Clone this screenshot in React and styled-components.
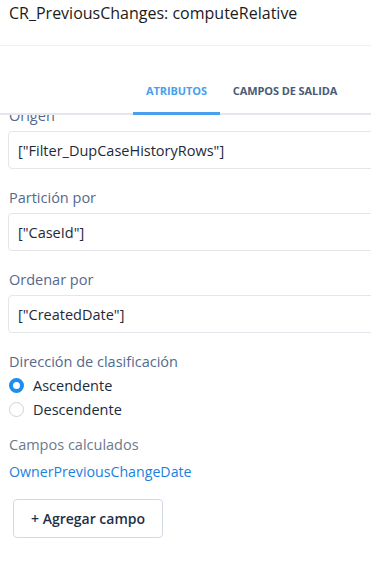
import React from 'react'
import styled, { createGlobalStyle } from 'styled-components'

const GlobalStyle = createGlobalStyle`
  html, body {
    margin: 0;
    padding: 0;
    background: #fff;
    overflow: hidden;
  }
  body {
    font-family: 'Open Sans', 'Noto Sans', sans-serif;
    color: #16325c;
  }
`

const Panel = styled.div`
  width: 371px;
  height: 564px;
  display: flex;
  flex-direction: column;
  overflow: hidden;
`

const Header = styled.div`
  height: 45px;
  border-bottom: 1px solid #eef0f3;
  padding: 0 9px;
  flex: none;
`

const Title = styled.h1`
  margin: 0;
  padding-top: 3px;
  font-size: 16px;
  font-weight: 400;
  line-height: 20px;
  color: #1b1b1b;
`

const TabBar = styled.div`
  display: flex;
  padding: 38px 0 0 133px;
  border-bottom: 2px solid #e4e8ee;
  background: #fff;
  position: relative;
  z-index: 1;
  flex: none;
`

const Tab = styled.div`
  padding: 0 13px 14px;
  font-size: 11px;
  font-weight: 700;
  letter-spacing: -0.1px;
  line-height: 14px;
  color: ${(p) => (p.active ? '#4aa0ec' : '#4a5b75')};
  margin-bottom: -2px;
  border-bottom: 3px solid ${(p) => (p.active ? '#4aa0ec' : 'transparent')};
`

const Body = styled.div`
  flex: 1;
  overflow: hidden;
  padding: 0 0 0 8px;
`

const Scroller = styled.div`
  margin-top: -9px;
`

const Label = styled.div`
  font-size: 14.5px;
  line-height: 20px;
  color: ${(p) => (p.muted ? '#6c7a8d' : '#54698d')};
  padding-left: 1px;
  margin-bottom: 5px;
`

const Field = styled.div`
  width: 420px;
  height: 38px;
  box-sizing: border-box;
  border: 1px solid #e3e6eb;
  border-radius: 4px;
  display: flex;
  align-items: center;
  padding-left: 9px;
  font-size: 14.5px;
  color: #1e2a3b;
  margin-bottom: 19px;
`

const RadioGroup = styled.div`
  display: flex;
  flex-direction: column;
  gap: 5px;
  margin-top: -1px;
  margin-bottom: 16px;
`

const RadioRow = styled.label`
  display: flex;
  align-items: center;
  gap: 9px;
  font-size: 14.5px;
  line-height: 19px;
  color: #1e2a3b;
`

const RadioDot = styled.span`
  width: 15px;
  height: 15px;
  box-sizing: border-box;
  border-radius: 50%;
  margin-left: 1px;
  border: ${(p) => (p.checked ? '4px solid #1b8ef0' : '1px solid #ccd3dd')};
  background: #fff;
`

const Link = styled.a`
  display: block;
  font-size: 14.2px;
  line-height: 20px;
  color: #1a7fe0;
  text-decoration: none;
  padding-left: 1px;
  margin-top: 7px;
`

const AddButton = styled.button`
  margin: 17px 0 0 5px;
  width: 150px;
  height: 39px;
  background: #fff;
  border: 1px solid #d3d9e2;
  border-radius: 4px;
  font-family: inherit;
  font-size: 14px;
  font-weight: 600;
  color: #1e2f48;
`

export default function App() {
  return (
    <Panel>
      <GlobalStyle />
      <Header>
        <Title>CR_PreviousChanges: computeRelative</Title>
      </Header>
      <TabBar>
        <Tab active>ATRIBUTOS</Tab>
        <Tab>CAMPOS DE SALIDA</Tab>
      </TabBar>
      <Body>
        <Scroller>
          <Label>Origen</Label>
          <Field>["Filter_DupCaseHistoryRows"]</Field>
          <Label>Partición por</Label>
          <Field>["CaseId"]</Field>
          <Label>Ordenar por</Label>
          <Field>["CreatedDate"]</Field>
          <Label>Dirección de clasificación</Label>
          <RadioGroup>
            <RadioRow>
              <RadioDot checked />
              Ascendente
            </RadioRow>
            <RadioRow>
              <RadioDot />
              Descendente
            </RadioRow>
          </RadioGroup>
          <Label muted>Campos calculados</Label>
          <Link>OwnerPreviousChangeDate</Link>
          <AddButton>+ Agregar campo</AddButton>
        </Scroller>
      </Body>
    </Panel>
  )
}
